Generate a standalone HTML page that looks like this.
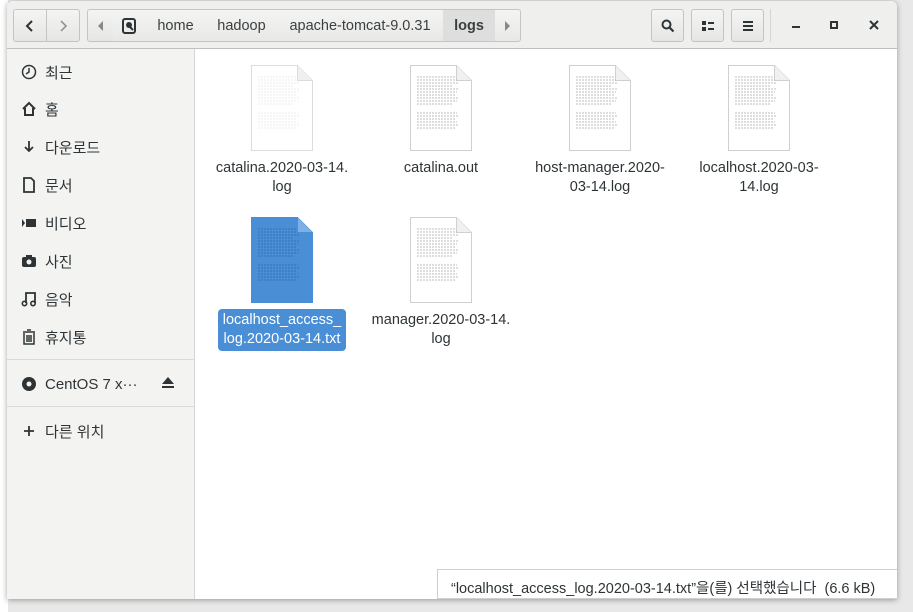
<!DOCTYPE html>
<html><head><meta charset="utf-8"><style>
*{box-sizing:border-box;margin:0;padding:0}
body{width:913px;height:612px;overflow:hidden;background:#e8e8e8;font-family:"Liberation Sans","Noto Sans CJK KR",sans-serif;font-size:14px;color:#2e3436;position:relative}
.lstrip{position:absolute;left:0;top:0;width:8px;height:612px;background:#fff}
.win{position:absolute;left:7px;top:1px;width:890px;height:598px;background:#fff;border-radius:6px 6px 0 0;box-shadow:0 1px 6px rgba(0,0,0,.35);overflow:hidden}
.hdr{position:absolute;left:0;top:0;width:890px;height:48px;background:#efefee;border-bottom:1px solid #bfbfbd}
.btn{position:absolute;top:8px;height:33px;border:1px solid #c4c4c2;border-radius:3px;background:linear-gradient(#f4f4f3,#e6e6e5);display:flex;align-items:center;justify-content:center;color:#2e3436}
.crumb{position:absolute;top:8px;height:33px;border-top:1px solid #c4c4c2;border-bottom:1px solid #c4c4c2;border-right:1px solid #c4c4c2;background:linear-gradient(#f4f4f3,#e8e8e7);display:flex;align-items:center;justify-content:center;font-size:14.5px;color:#3a3f40}
.side{position:absolute;left:0;top:48px;width:188px;height:550px;background:#f3f3f2;border-right:1px solid #d5d5d3}
.si{position:absolute;left:14px;height:20px;display:flex;align-items:center;font-size:15px;color:#2e3436}
.si svg{width:16px;height:16px;margin-right:8px}
.sep{position:absolute;left:0;width:188px;height:1px;background:#d9d9d7}
.file{position:absolute;width:62px;height:86px}
.lbl{position:absolute;width:150px;text-align:center;font-size:14.5px;line-height:19px;color:#2e3436}
.status{position:absolute;top:568px;width:460px;height:30px;border:1px solid #cfcfcd;border-right:none;background:#fff;font-size:14.5px;padding:7px 0 0 13px;color:#2e3436}
</style></head><body>
<svg width="0" height="0" style="position:absolute">
 <defs>
  <g id="lines">
   <path d="M7 12h38M7 15h40M7 18h42M7 21h36M7 24h42M7 27h40M7 30h38M7 33h42M7 36h40M7 39h36M7 48h40M7 51h42M7 54h38M7 57h40M7 60h42M7 63h38" stroke-width="0.8" stroke-dasharray="2 1"/>
  </g>
 </defs>
</svg>
<div class="lstrip"></div>
<div class="win">
 <div class="hdr">
  <div class="btn" style="left:6px;width:34px;border-radius:3px 0 0 3px">
   <svg width="12" height="14"><path d="M8 2L3 7l5 5" stroke="#2e3436" stroke-width="2" fill="none"/></svg></div>
  <div class="btn" style="left:39px;width:34px;border-radius:0 3px 3px 0">
   <svg width="12" height="14"><path d="M4 2l5 5-5 5" stroke="#8a8e8f" stroke-width="1.5" fill="none"/></svg></div>
  <div class="btn" style="left:80px;width:27px;border-radius:3px 0 0 3px"><svg width="6" height="10"><path d="M5 0L0 5l5 5z" fill="#888"/></svg></div>
  <div class="crumb" style="left:106px;width:33px"><svg width="14" height="16"><rect x="1" y="1" width="12" height="14" rx="2" fill="none" stroke="#2e3436" stroke-width="2"/><circle cx="7" cy="7" r="3" fill="#2e3436"/><path d="M8 9l3 3" stroke="#2e3436" stroke-width="2"/></svg></div>
  <div class="crumb" style="left:138px;width:62px">home</div>
  <div class="crumb" style="left:199px;width:72px">hadoop</div>
  <div class="crumb" style="left:270px;width:167px">apache-tomcat-9.0.31</div>
  <div class="crumb" style="left:436px;width:53px;background:#dedede;font-weight:bold">logs</div>
  <div class="crumb" style="left:488px;width:26px;border-radius:0 3px 3px 0"><svg width="6" height="10"><path d="M0 0l5 5-5 5z" fill="#888"/></svg></div>
  <div class="btn" style="left:644px;width:33px"><svg width="14" height="14"><circle cx="5.5" cy="5.5" r="4" fill="none" stroke="#2e3436" stroke-width="2"/><path d="M8.5 8.5l4 4" stroke="#2e3436" stroke-width="2.2"/></svg></div>
  <div class="btn" style="left:684px;width:33px"><svg width="14" height="12"><rect x="1" y="1" width="4" height="4" fill="#2e3436"/><rect x="1" y="7" width="4" height="4" fill="#2e3436"/><rect x="7" y="2" width="6" height="2" fill="#2e3436"/><rect x="7" y="8" width="6" height="2" fill="#2e3436"/></svg></div>
  <div class="btn" style="left:724px;width:33px"><svg width="12" height="12"><rect x="1" y="1" width="10" height="2" fill="#2e3436"/><rect x="1" y="5" width="10" height="2" fill="#2e3436"/><rect x="1" y="9" width="10" height="2" fill="#2e3436"/></svg></div>
  <div style="position:absolute;left:763px;top:8px;width:1px;height:33px;background:#d5d5d3"></div>
  <div style="position:absolute;left:785px;top:25px;width:8px;height:2px;background:#2e3436"></div>
  <div style="position:absolute;left:823px;top:20px;width:8px;height:8px;border:2px solid #2e3436"></div>
  <svg style="position:absolute;left:862px;top:19px" width="10" height="10"><path d="M1 1l8 8M9 1l-8 8" stroke="#2e3436" stroke-width="2"/></svg>
 </div>
 <div class="side">
  <div class="si" style="top:13px"><svg viewBox="0 0 16 16"><circle cx="8" cy="8" r="6.5" fill="none" stroke="#2e3436" stroke-width="1.5"/><path d="M8 4v4l-3 2" stroke="#2e3436" stroke-width="1.5" fill="none"/></svg>최근</div>
  <div class="si" style="top:50px"><svg viewBox="0 0 16 16"><path d="M2 8l6-6 6 6M4 7v7h8V7" stroke="#2e3436" stroke-width="2" fill="none"/></svg>홈</div>
  <div class="si" style="top:88px"><svg viewBox="0 0 16 16"><path d="M8 2v10M4 8l4 4 4-4" stroke="#2e3436" stroke-width="1.8" fill="none"/></svg>다운로드</div>
  <div class="si" style="top:126px"><svg viewBox="0 0 16 16"><path d="M3 1h7l3 3v11H3z" stroke="#2e3436" stroke-width="1.8" fill="none"/></svg>문서</div>
  <div class="si" style="top:164px"><svg viewBox="0 0 16 16"><rect x="5" y="4" width="10" height="8" fill="#2e3436"/><path d="M1 4l3 4-3 4z" fill="#2e3436"/></svg>비디오</div>
  <div class="si" style="top:202px"><svg viewBox="0 0 16 16"><rect x="1" y="4" width="14" height="10" rx="2" fill="#2e3436"/><rect x="5" y="2" width="6" height="3" fill="#2e3436"/><circle cx="8" cy="9" r="2.5" fill="#f3f3f2"/></svg>사진</div>
  <div class="si" style="top:240px"><svg viewBox="0 0 16 16"><path d="M5 12V2h9v10" stroke="#2e3436" stroke-width="1.8" fill="none"/><circle cx="3.5" cy="12.5" r="2.2" fill="none" stroke="#2e3436" stroke-width="1.6"/><circle cx="12" cy="12.5" r="2.2" fill="none" stroke="#2e3436" stroke-width="1.6"/></svg>음악</div>
  <div class="si" style="top:278px"><svg viewBox="0 0 16 16"><path d="M2 3h12M6 1h4M3 4v11h10V4M6 6v7M8 6v7M10 6v7" stroke="#2e3436" stroke-width="1.5" fill="none"/></svg>휴지통</div>
  <div class="sep" style="top:310px"></div>
  <div class="si" style="top:325px"><svg viewBox="0 0 16 16"><circle cx="8" cy="8" r="7" fill="#2e3436"/><circle cx="8" cy="8" r="2.5" fill="#f3f3f2"/></svg>CentOS 7 x···</div>
  <svg style="position:absolute;left:154px;top:328px" width="14" height="12"><path d="M7 0l6 7H1z" fill="#2e3436"/><rect x="1" y="9" width="12" height="2" fill="#2e3436"/></svg>
  <div class="sep" style="top:357px"></div>
  <div class="si" style="top:372px"><svg viewBox="0 0 16 16"><path d="M8 3v10M3 8h10" stroke="#2e3436" stroke-width="1.8"/></svg>다른 위치</div>
 </div>

 <svg class="file" style="left:244px;top:64px" viewBox="0 0 62 86"><path d="M0.5 0.5h46l15 15v70h-61z" fill="#fff" stroke="#dcdcdc"/><path d="M46.5 0.5v15h15" fill="#f0f0f0" stroke="#dcdcdc"/><g stroke="#e6e6e6"><use href="#lines"/></g></svg>
 <div class="lbl" style="left:200px;top:158px">catalina.2020-03-14.<br>log</div>
 <svg class="file" style="left:403px;top:64px" viewBox="0 0 62 86"><path d="M0.5 0.5h46l15 15v70h-61z" fill="#fff" stroke="#d0d0d0"/><path d="M46.5 0.5v15h15" fill="#f0f0f0" stroke="#d0d0d0"/><g stroke="#a8a8a8"><use href="#lines"/></g></svg>
 <div class="lbl" style="left:359px;top:158px">catalina.out</div>
 <svg class="file" style="left:562px;top:64px" viewBox="0 0 62 86"><path d="M0.5 0.5h46l15 15v70h-61z" fill="#fff" stroke="#d0d0d0"/><path d="M46.5 0.5v15h15" fill="#f0f0f0" stroke="#d0d0d0"/><g stroke="#a8a8a8"><use href="#lines"/></g></svg>
 <div class="lbl" style="left:518px;top:158px">host-manager.2020-<br>03-14.log</div>
 <svg class="file" style="left:721px;top:64px" viewBox="0 0 62 86"><path d="M0.5 0.5h46l15 15v70h-61z" fill="#fff" stroke="#d0d0d0"/><path d="M46.5 0.5v15h15" fill="#f0f0f0" stroke="#d0d0d0"/><g stroke="#a8a8a8"><use href="#lines"/></g></svg>
 <div class="lbl" style="left:677px;top:158px">localhost.2020-03-<br>14.log</div>

 <svg class="file" style="left:244px;top:216px" viewBox="0 0 62 86"><path d="M0.5 0.5h46l15 15v70h-61z" fill="#4a8fd6" stroke="#4a8fd6"/><path d="M46.5 0.5v15h15" fill="#7cb0e6" stroke="#4a8fd6"/><g stroke="#2d6aae"><use href="#lines"/></g></svg>
 <div style="position:absolute;left:211px;top:308px;width:128px;height:42px;background:#4a8fd6;border-radius:4px"></div>
 <div class="lbl" style="left:200px;top:310px;color:#fff">localhost_access_<br>log.2020-03-14.txt</div>
 <svg class="file" style="left:403px;top:216px" viewBox="0 0 62 86"><path d="M0.5 0.5h46l15 15v70h-61z" fill="#fff" stroke="#d0d0d0"/><path d="M46.5 0.5v15h15" fill="#f0f0f0" stroke="#d0d0d0"/><g stroke="#a8a8a8"><use href="#lines"/></g></svg>
 <div class="lbl" style="left:359px;top:310px">manager.2020-03-14.<br>log</div>
 <div class="status" style="left:430px">“localhost_access_log.2020-03-14.txt”을(를) 선택했습니다 &nbsp;(6.6 kB)</div>
</div>
</body></html>
